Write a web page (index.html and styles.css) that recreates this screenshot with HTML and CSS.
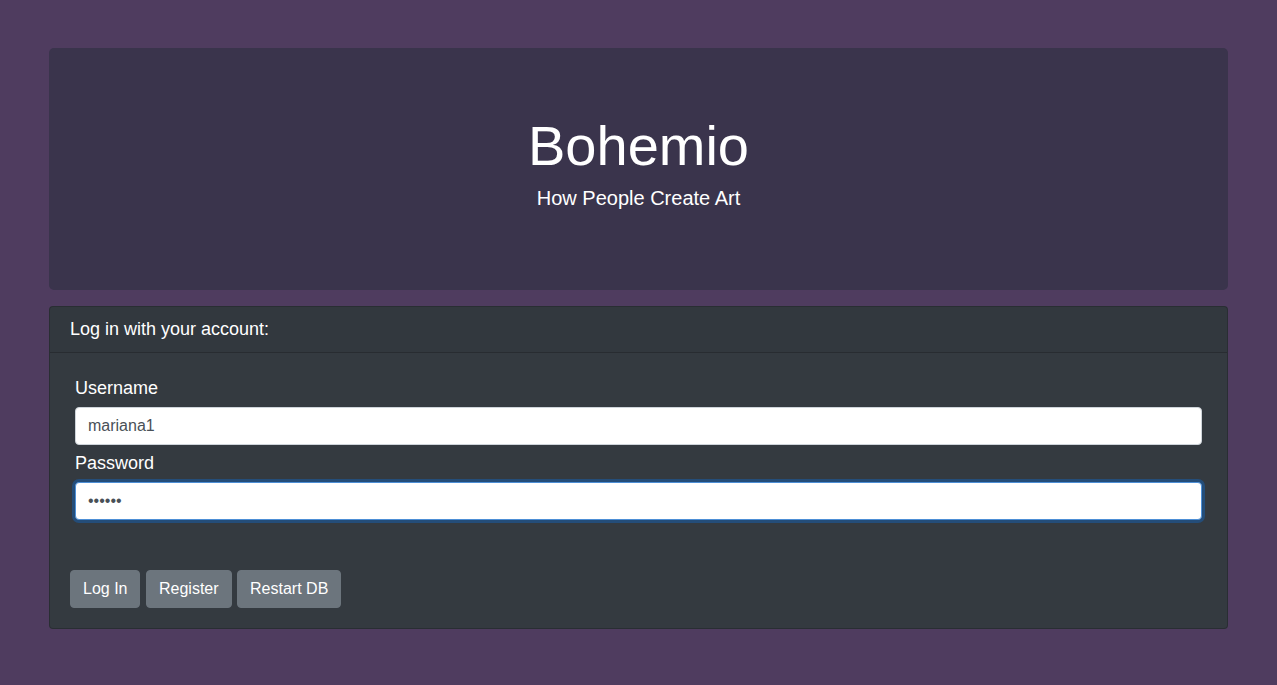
FILE: index.html
```html
<!DOCTYPE html>
<html lang="en">
<head>
<meta charset="utf-8">
<title>Bohemio</title>
<link rel="stylesheet" href="styles.css">
</head>
<body>
<main class="page">
  <header class="jumbotron">
    <h1 class="title">Bohemio</h1>
    <p class="lead">How People Create Art</p>
  </header>
  <section class="card">
    <div class="card-header">Log in with your account:</div>
    <div class="card-body">
      <form class="login-form">
        <label class="field-label" for="username">Username</label>
        <input class="field-input" id="username" type="text" value="mariana1">
        <label class="field-label" for="password">Password</label>
        <input class="field-input is-focused" id="password" type="password" value="secret">
      </form>
      <div class="actions">
        <button class="btn" type="button">Log In</button>
        <button class="btn" type="button">Register</button>
        <button class="btn" type="button">Restart DB</button>
      </div>
    </div>
  </section>
</main>
</body>
</html>
```

FILE: styles.css
```css
* { box-sizing: border-box; }
html, body { margin: 0; padding: 0; }
body {
  background: #4f3c5f;
  font-family: "Liberation Sans", Arial, sans-serif;
  color: #fff;
  font-size: 16px;
  line-height: 1.5;
}
.page {
  padding: 48px 49px;
  display: flex;
  flex-direction: column;
  gap: 16px;
}
.jumbotron {
  background: #3a344c;
  border-radius: 5px;
  height: 242px;
  padding-top: 64px;
  text-align: center;
}
.title {
  margin: 0 0 4px;
  font-size: 56px;
  font-weight: 400;
  line-height: 1.2;
}
.lead {
  margin: 0;
  font-size: 20px;
  line-height: 30px;
}
.card {
  background: #343a40;
  border: 1px solid rgba(0,0,0,.2);
  border-radius: 4px;
}
.card-header {
  padding: 9px 20px;
  font-size: 18px;
  line-height: 27px;
  background: rgba(0,0,0,.03);
  border-bottom: 1px solid rgba(0,0,0,.2);
}
.card-body {
  padding: 22px 20px 20px;
}
.login-form {
  padding: 0 5px;
  display: flex;
  flex-direction: column;
}
.field-label {
  display: block;
  font-size: 18px;
  line-height: 27px;
  margin-bottom: 5px;
}
.field-input {
  display: block;
  width: 100%;
  height: 38px;
  padding: 6px 12px;
  font-family: inherit;
  font-size: 16px;
  color: #495057;
  background: #fff;
  border: 1px solid #ced4da;
  border-radius: 4px;
  margin-bottom: 5px;
  outline: none;
}
.field-input.is-focused {
  border-color: #4d8fd6;
  box-shadow: 0 0 0 3px rgba(0,123,255,.3);
}
.actions {
  display: flex;
  gap: 5.5px;
  margin-top: 45px;
}
.btn {
  font-family: inherit;
  font-size: 16px;
  line-height: 24px;
  padding: 6px 12px;
  color: #fff;
  background: #6c757d;
  border: 1px solid #6c757d;
  border-radius: 4px;
}
```
